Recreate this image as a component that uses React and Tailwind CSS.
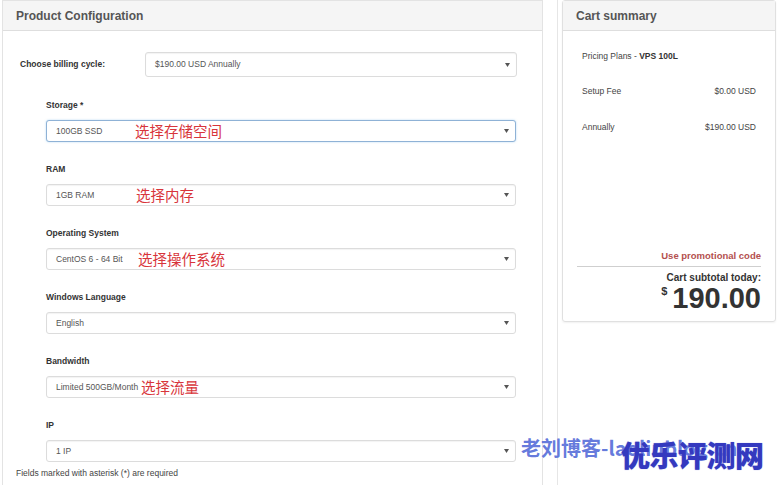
import React from "react";

const Arrow = () => (
  <svg width="5" height="4" viewBox="0 0 5 4" className="shrink-0">
    <path d="M0 0 L5 0 L2.5 4 Z" fill="#555" />
  </svg>
);

function Select({ value, note, noteLeft, focus, h = "h-[22px]", className = "" }) {
  return (
    <div
      className={`relative flex items-center justify-between ${h} rounded-[3px] border bg-white pl-[9px] pr-[6px] ${
        focus
          ? "border-[#8fb2d6] shadow-[0_0_2px_rgba(102,175,233,0.5)]"
          : "border-[#dcdcdc] shadow-[inset_0_1px_1px_rgba(0,0,0,0.05)]"
      } ${className}`}
    >
      <span className="text-[8.5px] text-[#555]">{value}</span>
      {note && (
        <span
          className="absolute top-1/2 -translate-y-1/2 text-[14.5px] leading-none text-[#d8353b]"
          style={{ left: noteLeft, fontFamily: '"Noto Sans CJK SC", sans-serif' }}
        >
          {note}
        </span>
      )}
      <Arrow />
    </div>
  );
}

function Group({ label, value, note, noteLeft, focus, mt }) {
  return (
    <div className={mt}>
      <div className="h-[12px] text-[8.5px] font-bold leading-[12px] text-[#333]">{label}</div>
      <Select value={value} note={note} noteLeft={noteLeft} focus={focus} className="mt-[9px]" />
    </div>
  );
}

export default function App() {
  return (
    <div
      className="relative h-[485px] w-[780px] overflow-hidden bg-white"
      style={{ fontFamily: '"Liberation Sans", Arial, "Noto Sans CJK SC", sans-serif' }}
    >
      <div className="flex h-full">
        {/* left panel */}
        <div className="ml-[2px] h-[492px] w-[541px] border border-b-0 border-[#e3e3e3]">
          <div className="flex h-[30px] items-center border-b border-[#dedede] bg-[#f5f5f5] px-[13px]">
            <span className="text-[12px] font-bold text-[#555]">Product Configuration</span>
          </div>
          <div className="pl-[17px] pr-[25px]">
            <div className="mt-[21px] flex items-center">
              <div className="w-[125px] text-[8.5px] font-bold text-[#333]">Choose billing cycle:</div>
              <Select value="$190.00 USD Annually" h="h-[25px]" className="flex-1" />
            </div>
            <div className="pl-[26px] pr-[1px]">
              <Group mt="mt-[22px]" label="Storage *" value="100GB SSD" note="选择存储空间" noteLeft="88px" focus />
              <Group mt="mt-[21px]" label="RAM" value="1GB RAM" note="选择内存" noteLeft="89px" />
              <Group mt="mt-[21px]" label="Operating System" value="CentOS 6 - 64 Bit" note="选择操作系统" noteLeft="91px" />
              <Group mt="mt-[21px]" label="Windows Language" value="English" />
              <Group mt="mt-[21px]" label="Bandwidth" value="Limited 500GB/Month" note="选择流量" noteLeft="94px" />
              <Group mt="mt-[21px]" label="IP" value="1 IP" />
            </div>
          </div>
          <div className="mt-[5px] pl-[13px] text-[8.5px] leading-[12px] text-[#444]">
            Fields marked with asterisk (*) are required
          </div>
        </div>

        {/* sidebar */}
        <div className="ml-[14px] h-full border-l border-[#e6e6e6] pl-[4px]">
          <div className="flex h-[322px] w-[214px] flex-col rounded-[3px] border border-[#e0e0e0] shadow-[0_1px_2px_rgba(0,0,0,0.06)]">
            <div className="flex h-[30px] items-center border-b border-[#dedede] bg-[#f5f5f5] px-[13px]">
              <span className="text-[12px] font-bold text-[#555]">Cart summary</span>
            </div>
            <div className="flex flex-1 flex-col px-[14px] text-[8.5px] text-[#444]">
              <div className="mt-[19px] pl-[5px] leading-[12px]">
                Pricing Plans - <span className="font-bold text-[#333]">VPS 100L</span>
              </div>
              <div className="mt-[23px] flex justify-between pl-[5px] pr-[5px] leading-[12px]">
                <span>Setup Fee</span>
                <span>$0.00 USD</span>
              </div>
              <div className="mt-[24px] flex justify-between pl-[5px] pr-[5px] leading-[12px]">
                <span>Annually</span>
                <span>$190.00 USD</span>
              </div>
              <div className="mt-[117px] text-right text-[9.5px] font-bold leading-[12px] text-[#b4504e]">
                Use promotional code
              </div>
              <div className="mt-[4px] border-t border-[#cfcfcf]" />
              <div className="mt-[5px] text-right text-[10px] font-bold leading-[12px] text-[#333]">
                Cart subtotal today:
              </div>
              <div className="-mt-[2px] flex items-start justify-end text-[#333]">
                <span className="mt-[4px] mr-[5px] text-[11px] font-bold leading-none">$</span>
                <span className="text-[29px] font-bold leading-[32px]">190.00</span>
              </div>
            </div>
          </div>
        </div>
      </div>

      {/* watermark */}
      <div
        className="absolute left-[521px] top-[436px] whitespace-nowrap text-[20px] font-bold leading-[24px] text-[#4a63d6]/85"
        style={{ fontFamily: '"Noto Sans CJK SC", "Liberation Sans", sans-serif' }}
      >
        老刘博客-laoliublog.cn
      </div>
      <div
        className="absolute left-[621px] top-[434px] whitespace-nowrap text-[29px] font-black leading-[40px] tracking-[-0.5px] text-[#3439bf]"
        style={{ fontFamily: '"Noto Sans CJK SC", sans-serif', textShadow: "0 0 1px #8b8fe0" }}
      >
        优乐评测网
      </div>
    </div>
  );
}
